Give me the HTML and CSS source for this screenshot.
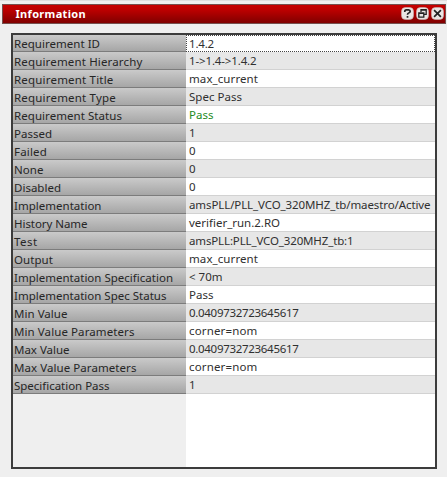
FILE: index.html
```html
<!DOCTYPE html>
<html lang="en">
<head>
<meta charset="utf-8">
<title>Information</title>
<link rel="stylesheet" href="styles.css">
</head>
<body>
<section class="dock">
  <header class="titlebar">
    <h1><span data-w="70.5">Information</span></h1>
    <div class="buttons">
      <svg viewBox="0 0 13 13"><rect class="btn" x=".5" y=".5" width="12" height="12" rx="4"/><path class="ink" d="M3.8 4.9V4Q4 2.9 5.2 2.9H7.6Q9.2 3 9.2 4.3Q9.2 5.5 7.7 6Q6.5 6.3 6.5 7.8M6.5 9V10.7"/></svg>
      <svg viewBox="0 0 13 13"><rect class="btn" x=".5" y=".5" width="12" height="12" rx="4"/><path class="ink thin" d="M5 5V2.7H10.2V7.3H8M5 3.1H10.2M2.8 5.8H7.8V10.2H2.8ZM2.8 6.3H7.8"/></svg>
      <svg viewBox="0 0 13 13"><rect class="btn" x=".5" y=".5" width="12" height="12" rx="4"/><path class="ink" d="M3.1 3.1L9.9 9.9M9.9 3.1L3.1 9.9"/></svg>
    </div>
  </header>
  <main class="table" id="table"></main>
</section>
<script src="table.js"></script>
</body>
</html>
```
FILE: styles.css
```css
* { box-sizing: border-box; }
body {
  margin: 0;
  width: 447px;
  height: 477px;
  overflow: hidden;
  background: #efefef;
  border-top: 1px solid #dedede;
  font-family: "Noto Sans", "Open Sans", sans-serif;
  font-size: 11.5px;
  color: #303030;
}
.dock { padding: 3px 1px 0 2px; }
.titlebar {
  display: flex;
  align-items: flex-start;
  justify-content: space-between;
  height: 20px;
  padding: 1px 1px 0 12.5px;
  border: 1px solid #75504e;
  background: linear-gradient(#c60000, #ba0000 30%, #800000);
}
h1 {
  margin: 0;
  font-family: "Noto Sans", sans-serif;
  font-size: 11px;
  line-height: 16px;
  font-weight: 700;
  color: #fff;
}
.buttons { display: flex; gap: 2px; padding-top: 1px; }
.buttons svg { width: 13px; height: 13px; display: block; }
.btn { fill: #e9e5e3; stroke: #c9b5b1; stroke-width: .6; }
.ink { fill: none; stroke: #222; stroke-width: 1.7; }
.thin { stroke-width: 1.3; }
.table {
  width: 426px;
  height: 436px;
  margin: 9px 0 0 9px;
  border: 2px solid #3c3c3c;
  display: flex;
  flex-direction: column;
}
.row {
  display: grid;
  grid-template-columns: 173px 1fr;
  grid-template-rows: 18px;
  flex: none;
}
.row:first-child { grid-template-rows: 17px; }
.row span { white-space: pre; }
.label {
  padding-left: 1px;
  line-height: 20px;
  color: #262626;
  background: linear-gradient(#cacaca, #a6a6a6);
  border-bottom: 1px solid #7c7c7c;
}
.value {
  padding-left: 3px;
  line-height: 18px;
  background: #fff;
  border-bottom: 1px solid #d2d2d2;
}
.row:nth-child(even) .value { background: #e7e7e7; }
.row:first-child .value { border: 1px dotted #444; padding-left: 2px; line-height: 15px; }
.row:first-child .label { line-height: 18px; }
.row .pass { color: #238a23; }
.rest { flex: 1; display: grid; grid-template-columns: 173px 1fr; }
.rest div + div { background: #fff; }
```
FILE: table.js
```javascript
// label, label width, value, value width
const rows = [
  ["Requirement ID", 86, "1.4.2", 25],
  ["Requirement Hierarchy", 128.5, "1->1.4->1.4.2", 67.5],
  ["Requirement Title", 99.5, "max_current", 69],
  ["Requirement Type", 102, "Spec Pass", 53],
  ["Requirement Status", 108, "Pass", 24.5],
  ["Passed", 38, "1", 7],
  ["Failed", 33, "0", 7],
  ["None", 29.5, "0", 7],
  ["Disabled", 47, "0", 7],
  ["Implementation", 87.5, "amsPLL/PLL_VCO_320MHZ_tb/maestro/Active", 241.5],
  ["History Name", 73.5, "verifier_run.2.RO", 91],
  ["Test", 23.5, "amsPLL:PLL_VCO_320MHZ_tb:1", 164.5],
  ["Output", 39, "max_current", 69],
  ["Implementation Specification", 159, "< 70m", 33.5],
  ["Implementation Spec Status", 152.5, "Pass", 24.5],
  ["Min Value", 53.5, "0.0409732723645617", 109.5],
  ["Min Value Parameters", 120.5, "corner=nom", 68.5],
  ["Max Value", 55.5, "0.0409732723645617", 109.5],
  ["Max Value Parameters", 122.5, "corner=nom", 68.5],
  ["Specification Pass", 95.5, "1", 7]
];
const table = document.getElementById("table");
const cell = (kind, text, width) => {
  const div = document.createElement("div");
  div.className = kind;
  const span = document.createElement("span");
  span.textContent = text;
  span.dataset.w = width;
  div.append(span);
  return div;
};
rows.forEach(([label, lw, value, vw]) => {
  const row = document.createElement("div");
  row.className = "row";
  const v = cell("value", value, vw);
  if (label === "Requirement Status") v.classList.add("pass");
  row.append(cell("label", label, lw), v);
  table.append(row);
});
const rest = document.createElement("div");
rest.className = "rest";
rest.append(document.createElement("div"), document.createElement("div"));
table.append(rest);

// Spread each text over its measured column width
document.querySelectorAll("[data-w]").forEach(s => {
  const n = s.textContent.length;
  if (n > 1) s.style.letterSpacing = (s.dataset.w - s.getBoundingClientRect().width) / n + "px";
});
```
